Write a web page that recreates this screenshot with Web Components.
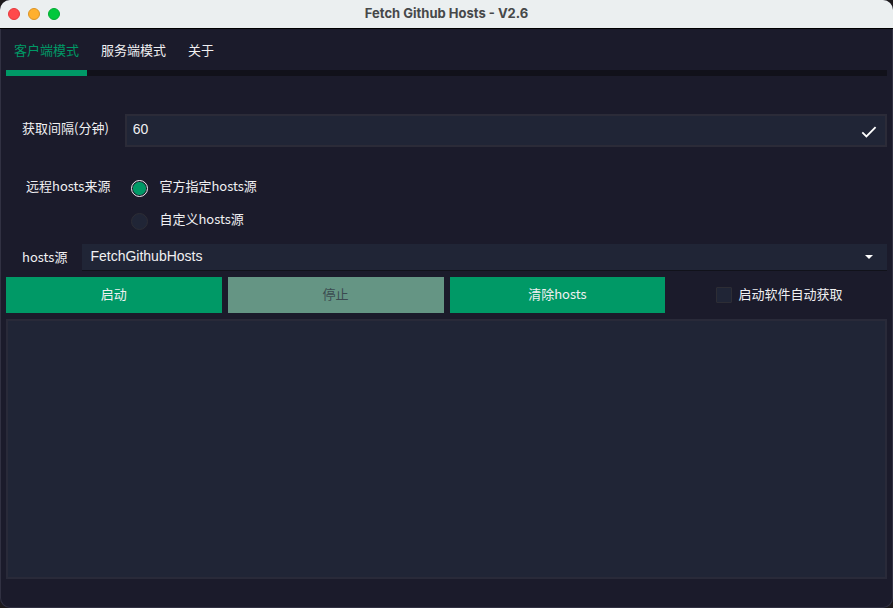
<!DOCTYPE html>
<html lang="zh-CN">
<head>
<meta charset="utf-8">
<meta name="viewport" content="width=device-width, initial-scale=1">
<title>Fetch Github Hosts - V2.6</title>
<style>
  :root {
    --bg: #1b1b2b;
    --field: #202536;
    --line: #2b2b38;
    --dark: #11111a;
    --green: #009966;
    --muted: #659584;
    --text: #f0f0f2;
  }
  html, body { margin: 0; min-height: 100%; background: #1d1a1c; }
  body {
    font: 13px/20px "Noto Sans CJK SC", "Noto Sans", sans-serif;
    color: var(--text);
  }
</style>
</head>
<body>
<app-window heading="Fetch Github Hosts - V2.6">
  <tab-bar></tab-bar>
  <interval-field></interval-field>
  <source-choice></source-choice>
  <source-select></source-select>
  <action-row>
    <action-button>启动</action-button>
    <action-button disabled>停止</action-button>
    <action-button>清除hosts</action-button>
    <auto-check></auto-check>
  </action-row>
  <log-view></log-view>
</app-window>
<script>
const define = (name, html, setup) => {
  const template = document.createElement('template');
  template.innerHTML = '<style>*{box-sizing:border-box}button,input,select,textarea{font:inherit;color:inherit;margin:0;border-radius:0}</style>' + html;
  customElements.define(name, class extends HTMLElement {
    constructor() {
      super();
      this.attachShadow({ mode: 'open' }).append(template.content.cloneNode(true));
    }
    connectedCallback() { if (setup) setup(this, this.shadowRoot); }
  });
};

define('app-window', `
<style>
  :host { display: flex; flex-direction: column; box-sizing: border-box; min-height: 100vh;
    background: var(--bg); border-radius: 10px; overflow: hidden; box-shadow: inset 0 0 0 1px #313142; }
  header { display: grid; grid-template-columns: 1fr auto 1fr; align-items: center; height: 29px;
    padding: 0 8px; background: #ebeff0; border-bottom: 1px solid #000; }
  .lights { display: flex; gap: 8px; }
  .lights button { width: 12px; height: 12px; padding: 0; border: 1px solid #e5393d; border-radius: 50%; background: #ff4a4c; }
  .lights .min { background: #ffb02e; border-color: #db9426; }
  .lights .max { background: #00c83c; border-color: #00ab32; }
  h1 { margin: 0; padding-bottom: 2px; font: 700 13px/20px Inter, sans-serif; color: #464849; }
  main { flex: 1; display: flex; flex-direction: column; padding: 5px 6px 29px; }
</style>
<header>
  <div class="lights"><button aria-label="关闭"></button><button class="min" aria-label="最小化"></button><button class="max" aria-label="最大化"></button></div>
  <h1></h1>
</header>
<main><slot></slot></main>`,
(host, root) => { root.querySelector('h1').textContent = host.getAttribute('heading'); });

define('tab-bar', `
<style>
  :host { display: block; }
  div { display: flex; gap: 6px; background: linear-gradient(var(--dark), var(--dark)) bottom / 100% 6px no-repeat; }
  button { height: 42px; padding: 0 8px 4px; border: 0; border-bottom: 6px solid transparent; background: none; }
  button[aria-selected=true] { color: var(--green); border-color: var(--green); }
</style>
<div role="tablist">
  <button role="tab" aria-selected="true">客户端模式</button>
  <button role="tab" aria-selected="false">服务端模式</button>
  <button role="tab" aria-selected="false">关于</button>
</div>`,
(host, root) => {
  const tabs = [...root.querySelectorAll('button')];
  tabs.forEach(t => t.onclick = () => tabs.forEach(o => o.setAttribute('aria-selected', o === t)));
});

define('interval-field', `
<style>
  :host { display: flex; padding: 38px 0 0 16px; gap: 16px; }
  label { padding-top: 4px; }
  .box { flex: 1; display: flex; align-items: center; height: 33px; padding-right: 8px; background: var(--field); border: 2px solid var(--line); }
  input { flex: 1; min-width: 0; height: 100%; padding: 0 6px 4px; border: 0; outline: 0; background: none; font: 14px/20px "Liberation Sans", sans-serif; }
  svg { width: 16px; height: 16px; margin-top: 2px; }
</style>
<label for="interval">获取间隔(分钟)</label>
<div class="box"><input id="interval" value="60" inputmode="numeric">
<svg viewBox="0 0 16 16" fill="none" stroke="#fff" stroke-width="1.8" aria-hidden="true"><path d="M1.3 8.4 5.4 12.4 14.6 3.2"/></svg></div>`);

define('source-choice', `
<style>
  :host { display: flex; gap: 21px; padding: 29px 0 0 20px; }
  .options { display: grid; gap: 12px; }
  .option { display: flex; gap: 11px; }
  input { appearance: none; width: 17px; height: 17px; margin-top: 4px; border-radius: 50%; background: var(--field); border: 1px solid #2d2d35; }
  input:checked { background: radial-gradient(circle, var(--green) 0 6px, var(--bg) 7px); border-color: #f0f0f2; }
</style>
<span id="title">远程hosts来源</span>
<div class="options" role="radiogroup" aria-labelledby="title">
  <div class="option"><input type="radio" name="source" id="official" checked><label for="official">官方指定hosts源</label></div>
  <div class="option"><input type="radio" name="source" id="custom"><label for="custom">自定义hosts源</label></div>
</div>`);

define('source-select', `
<style>
  :host { display: flex; gap: 15px; padding: 14px 0 0 16px; }
  label { padding-top: 3px; }
  .box { flex: 1; display: grid; align-items: center; background: var(--field); border-bottom: 1px solid #11121a; }
  select, svg { grid-area: 1 / 1; }
  select { appearance: none; height: 26px; width: 100%; padding: 0 32px 2px 8px; border: 0; background: none; font: 14px/20px "Liberation Sans", sans-serif; }
  svg { justify-self: end; width: 8px; height: 4px; margin-right: 14px; pointer-events: none; }
</style>
<label for="hosts">hosts源</label>
<div class="box"><select id="hosts"><option>FetchGithubHosts</option></select>
<svg viewBox="0 0 8 4" fill="#fff" aria-hidden="true"><path d="M0 0h8L4 4z"/></svg></div>`);

define('action-row', `
<style>
  :host { display: grid; grid-template-columns: repeat(4, 1fr); gap: 6px; padding: 6px 0; }
</style><slot></slot>`);

define('action-button', `
<style>
  :host { display: block; }
  button { display: block; width: 100%; height: 36px; padding: 0 0 2px; border: 0; background: var(--green); }
  button:disabled { background: var(--muted); color: #3b4a50; }
</style><button><slot></slot></button>`,
(host, root) => { root.querySelector('button').disabled = host.hasAttribute('disabled'); });

define('auto-check', `
<style>
  :host { display: flex; align-items: center; justify-content: center; gap: 7px; }
  input { appearance: none; width: 16px; height: 16px; background: var(--field); border: 1px solid #2d2d35; border-radius: 1px; }
  input:checked { background: var(--green); }
  label { padding-bottom: 2px; }
</style><input type="checkbox" id="auto"><label for="auto">启动软件自动获取</label>`);

define('log-view', `
<style>
  :host { flex: 1; display: flex; }
  textarea { flex: 1; min-width: 0; resize: none; padding: 6px; border: 2px solid #292a39; outline: 0; background: var(--field); }
</style><textarea aria-label="日志" readonly></textarea>`);
</script>
</body>
</html>
